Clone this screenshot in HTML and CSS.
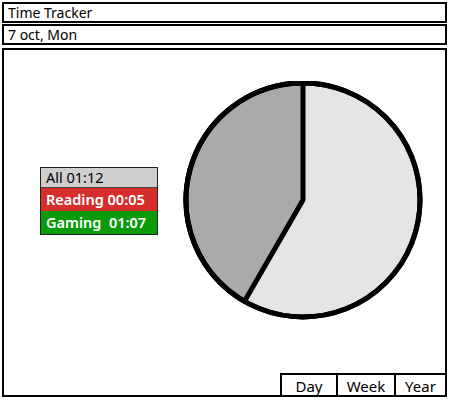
FILE: index.html
```html
<!DOCTYPE html>
<html>
<head>
<meta charset="utf-8">
<link rel="stylesheet" href="styles.css">
</head>
<body>
<div class="app">
  <div class="bar">Time Tracker</div>
  <div class="bar">7 oct, Mon</div>
  <div class="main">
    <div class="content">
      <div class="legend">
        <div class="row all">All 01:12</div>
        <div class="row reading">Reading 00:05</div>
        <div class="row gaming">Gaming&nbsp; 01:07</div>
      </div>
      <svg class="pie" width="246" height="242" viewBox="0 0 246 242">
        <circle cx="121" cy="119" r="117" fill="#e5e5e5" stroke="#000" stroke-width="5"/>
        <path d="M121 119 L121 2 A117 117 0 0 0 62.5 220.3 Z" fill="#aaaaaa" stroke="#000" stroke-width="5" stroke-linejoin="round"/>
        <circle cx="121" cy="119" r="117" fill="none" stroke="#000" stroke-width="5"/>
      </svg>
    </div>
    <div class="tabs">
      <div class="tab">Day</div>
      <div class="tab">Week</div>
      <div class="tab">Year</div>
    </div>
  </div>
</div>
</body>
</html>
```
FILE: styles.css
```css
html, body {
  margin: 0;
  padding: 0;
  background: #fff;
}
body {
  font-family: "Noto Sans", "DejaVu Sans", sans-serif;
  color: #000;
}
.app {
  width: 450px;
  height: 400px;
  box-sizing: border-box;
  padding: 2px 3px 3px 2px;
  display: flex;
  flex-direction: column;
  gap: 1px;
}
.bar {
  height: 21px;
  box-sizing: border-box;
  border: 2px solid #000;
  font-size: 14px;
  line-height: 17px;
  padding-left: 4px;
}
.main {
  flex: 1;
  margin-top: 2px;
  border: 2px solid #000;
  display: flex;
  flex-direction: column;
}
.content {
  flex: 1;
  display: flex;
  align-items: flex-start;
  padding-left: 36px;
}
.legend {
  width: 118px;
  margin-top: 117px;
  border: 1.5px solid #222;
  box-sizing: border-box;
  display: flex;
  flex-direction: column;
}
.row {
  font-size: 14.5px;
  line-height: 23px;
  padding-left: 5px;
  font-weight: 600;
}
.row.all {
  background: #cfcfcf;
  font-weight: 400;
  line-height: 19px;
  border-bottom: 1px solid #444;
}
.row.reading {
  background: #d42f2c;
  color: #fff;
}
.row.gaming {
  background: #0a9a0a;
  color: #fff;
}
.pie {
  margin-left: 24px;
  margin-top: 31px;
}
.tabs {
  display: flex;
  justify-content: flex-end;
  margin-bottom: -2px;
}
.tab {
  border: 2px solid #000;
  border-bottom: none;
  margin-left: -2px;
  height: 24px;
  box-sizing: border-box;
  font-size: 15px;
  line-height: 22px;
  text-align: center;
}
.tab:nth-child(1) { width: 58px; }
.tab:nth-child(2) { width: 60px; }
.tab:nth-child(3) { width: 53px; margin-right: -2px; }
```
